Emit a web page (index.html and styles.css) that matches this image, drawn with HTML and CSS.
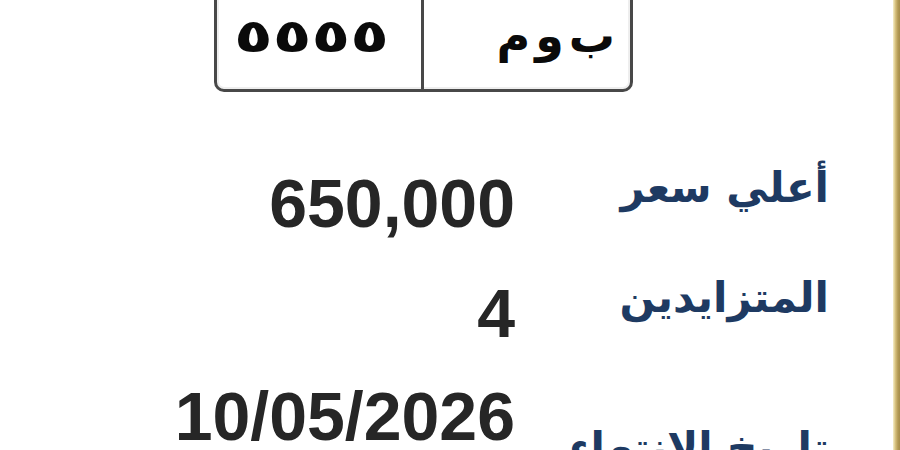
FILE: index.html
```html
<!DOCTYPE html>
<html lang="ar">
<head>
<meta charset="utf-8">
<title>لوحة</title>
<link rel="stylesheet" href="styles.css">
</head>
<body>
<div class="page">
  <main class="content">
    <div class="plate-wrap">
      <div class="plate">
        <div class="cell num"><span class="digits">٥٥٥٥</span></div>
        <div class="cell letters">ب و م</div>
      </div>
    </div>
    <div class="details">
      <div class="row r1">
        <div class="val">650,000</div>
        <div class="lbl">أعلي سعر</div>
      </div>
      <div class="row r2">
        <div class="val">4</div>
        <div class="lbl">المتزايدين</div>
      </div>
      <div class="row r3">
        <div class="val">10/05/2026</div>
        <div class="lbl">تاريخ الانتهاء</div>
      </div>
    </div>
  </main>
  <div class="edge"></div>
</div>
</body>
</html>
```
FILE: styles.css
```css
html, body {
  margin: 0;
  padding: 0;
  background: #ffffff;
}
.page {
  display: flex;
  width: 900px;
  height: 450px;
  overflow: hidden;
}
.content {
  flex: 1;
  min-width: 0;
}
.edge {
  width: 7px;
  flex: none;
  background: linear-gradient(to right, #f6efc8 0%, #d6c07e 35%, #b39a55 70%, #a58c4a 100%);
}
.plate-wrap {
  padding-left: 214px;
  margin-top: -30px;
}
.plate {
  display: flex;
  width: 419px;
  height: 122px;
  box-sizing: border-box;
  border: 3px solid #484848;
  border-radius: 10px;
  box-shadow: inset 0 0 0 2px #eeeeee;
  background: #fff;
}
.cell {
  box-sizing: border-box;
  height: 100%;
  color: #0a0a0a;
}
.num {
  width: 207px;
  border-right: 3px solid #484848;
  padding: 40px 0 0 17px;
}
.digits {
  display: inline-block;
  font: bold 46px/1 "DejaVu Sans", sans-serif;
  letter-spacing: 4px;
  transform: scaleX(1.38);
  transform-origin: left center;
}
.letters {
  flex: 1;
  direction: rtl;
  text-align: right;
  font: bold 46px/1 "DejaVu Sans", sans-serif;
  word-spacing: -11px;
  padding: 40px 15px 0 0;
}
.details {
  margin-top: 77px;
}
.row {
  display: grid;
  grid-template-columns: 515px 320px;
}
.r1 { height: 110px; }
.r2 { height: 103px; }
.r3 { height: 100px; }
.val {
  font: bold 68px/68px "Liberation Sans", Arial, sans-serif;
  color: #262626;
  text-align: right;
}
.lbl {
  direction: rtl;
  text-align: right;
  font: bold 42px/66px "DejaVu Sans", sans-serif;
  color: #1e3a62;
  margin-top: -14px;
  padding-right: 6px;
}
.r3 .lbl {
  margin-top: 33px;
}
```
